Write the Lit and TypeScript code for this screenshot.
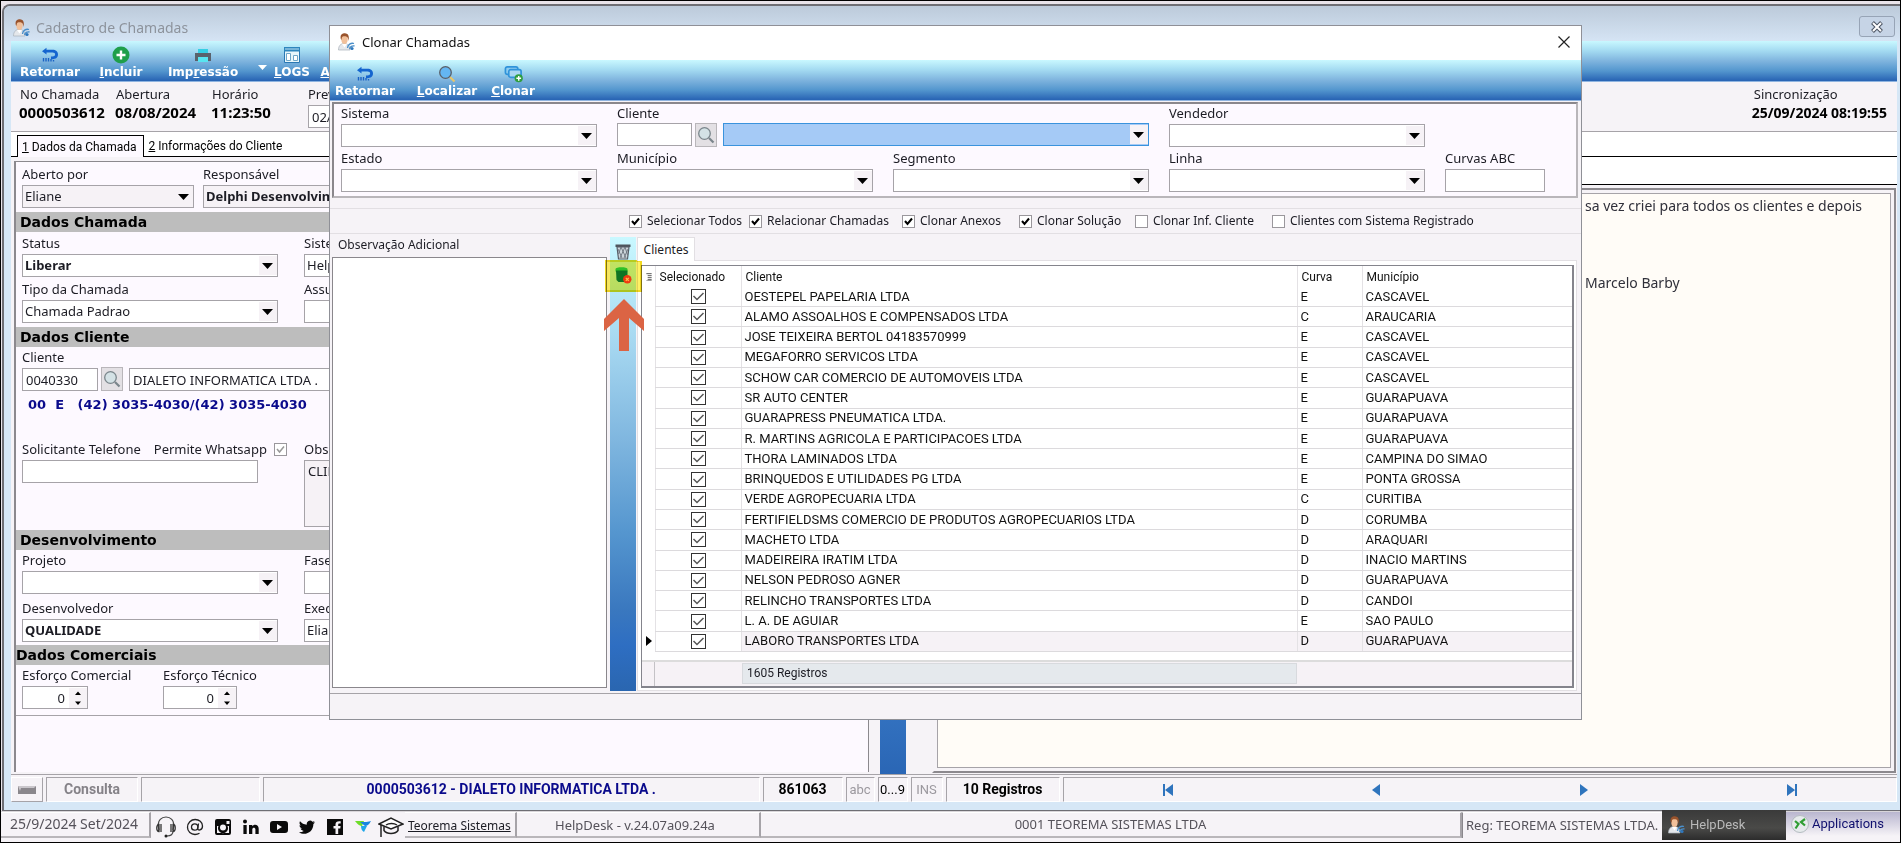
import { LitElement, html, css, svg, nothing } from "lit";
import { customElement } from "lit/decorators.js";

type Client = [string, string, string];

const CLIENTS: Client[] = [
  ["OESTEPEL PAPELARIA LTDA", "E", "CASCAVEL"],
  ["ALAMO ASSOALHOS E COMPENSADOS LTDA", "C", "ARAUCARIA"],
  ["JOSE TEIXEIRA BERTOL 04183570999", "E", "CASCAVEL"],
  ["MEGAFORRO SERVICOS LTDA", "E", "CASCAVEL"],
  ["SCHOW CAR COMERCIO DE AUTOMOVEIS LTDA", "E", "CASCAVEL"],
  ["SR AUTO CENTER", "E", "GUARAPUAVA"],
  ["GUARAPRESS PNEUMATICA LTDA.", "E", "GUARAPUAVA"],
  ["R. MARTINS AGRICOLA E PARTICIPACOES LTDA", "E", "GUARAPUAVA"],
  ["THORA LAMINADOS LTDA", "E", "CAMPINA DO SIMAO"],
  ["BRINQUEDOS E UTILIDADES PG LTDA", "E", "PONTA GROSSA"],
  ["VERDE AGROPECUARIA LTDA", "C", "CURITIBA"],
  ["FERTIFIELDSMS COMERCIO DE PRODUTOS AGROPECUARIOS LTDA", "D", "CORUMBA"],
  ["MACHETO LTDA", "D", "ARAQUARI"],
  ["MADEIREIRA IRATIM LTDA", "D", "INACIO MARTINS"],
  ["NELSON PEDROSO AGNER", "D", "GUARAPUAVA"],
  ["RELINCHO TRANSPORTES LTDA", "D", "CANDOI"],
  ["L. A. DE AGUIAR", "E", "SAO PAULO"],
  ["LABORO TRANSPORTES LTDA", "D", "GUARAPUAVA"],
];

/* ---------- icons ---------- */

const icon = (size: number, box: number, body: unknown) => html`<svg
  width=${size} height=${size} viewBox="0 0 ${box} ${box}" aria-hidden="true">${body}</svg>`;

const personIcon = () => icon(18, 18, svg`
  <path d="M.5 17c0-4 2-6.500 5.500-6.500s6 2 6 6.500z" fill="#e4e7eb" stroke="#a9b1ba" stroke-width=".7"/>
  <path d="M4 11l2.500 3.500L9 11z" fill="#fff"/>
  <ellipse cx="6.500" cy="6.200" rx="3.200" ry="4.800" fill="#f1c09a"/>
  <path d="M2.800 6C1.600 1 5-.2 7 .2 10.800.400 11.400 3.500 10.400 8 10.200 5 9.500 3.500 7.500 3.300 5.600 3 4.600 3.200 4 4.200 3.700 5 3.700 6 3.400 7z" fill="#99532c"/>
  <path d="M9.500 15a5 5 0 0 1 6.500-4.500M11.500 16a4 4 0 0 1 5-3" fill="none" stroke="#4a8fca" stroke-width="1.300"/>
  <circle cx="14" cy="15.500" r="1.600" fill="#2f78bd"/>`);

const backIcon = () => icon(18, 18, svg`
  <path d="M1 5.200 5.500 1.800v2H11.500c3.300 0 5.500 1.900 5.500 4.700s-2.200 4.700-5.500 4.700H10v-2.800h1.500c1.600 0 2.600-.7 2.600-1.900s-1-1.900-2.600-1.900h-6v2z" fill="#1565cf"/>
  <path d="M2.500 12v3.500M5 12v3.500M7.500 12v3.500M10 13v2.500M12.500 14v1.500" stroke="#1a62c4" stroke-width="1.400"/>`);

const addIcon = () => icon(18, 18, svg`
  <circle cx="9" cy="9" r="8.500" fill="#1f9f4b"/>
  <path d="M9 4.500v9M4.500 9h9" stroke="#fff" stroke-width="2.400"/>`);

const printIcon = () => icon(18, 18, svg`
  <path d="M4 3h10v4H4z" fill="#35cfe4"/>
  <path d="M1 7h16v8H1z" fill="#59626c"/>
  <path d="M4 11h10v5H4z" fill="#58e4f0"/>`);

const logsIcon = () => icon(18, 18, svg`
  <path d="M1.500 1.500h15v15h-15z" fill="#e8f6fb" stroke="#2a78b4"/>
  <path d="M1 1h16v4.500H1z" fill="#2e86bd"/>
  <path d="M2 3h14" stroke="#bfe3f5"/>
  <path d="M3.500 7.500h4v7h-4zM10.500 9.500h4v5h-4z" fill="#fff" stroke="#6fa6c8"/>`);

const lensIcon = (glass: string, rim: string, handle: string) => icon(18, 18, svg`
  <path d="M12 12l4.500 4.500" stroke=${handle} stroke-width="2.200"/>
  <circle cx="7.500" cy="7.500" r="5.800" fill=${glass} stroke=${rim} stroke-width="1.300"/>`);

const cloneIcon = () => icon(19, 20, svg`
  <rect x="1.500" y="3" width="13" height="8" rx="2" fill="#8fcdf0" stroke="#2f93da" stroke-width="1.800"/>
  <rect x="5" y="6" width="13" height="8" rx="2" fill="#a9d6f2" stroke="#2f93da" stroke-width="1.800"/>
  <circle cx="15.500" cy="15" r="4.300" fill="#2f9e3f"/>
  <path d="M15.500 12.500v5M13 15h5" stroke="#fff" stroke-width="1.500"/>`);

const basketIcon = () => icon(18, 18, svg`
  <path d="M1.500 2.500h15v2.500h-15z" fill="#4d545c"/>
  <path d="M3 5l1.500 12h9L15 5z" fill="#ccd5da" stroke="#565d66" stroke-width="1.200"/>
  <path d="M4 7l4 9M7 5l5 11M11 5l2.500 8M14 7l-4 9M11 5L6 16M7 5L4.500 12" stroke="#6b737c" stroke-width=".9"/>`);

const binIcon = () => icon(18, 18, svg`
  <path d="M1.500 3c0-2.500 12-2.500 12 0v2.500h-12z" fill="#2fcb62"/>
  <path d="M2 4.500h11.500v8L10 16H4.500L2.500 14z" fill="#0f7a5a"/>
  <circle cx="13.300" cy="13.300" r="4.200" fill="#f03c28"/>
  <path d="M11.800 11.800l3 3M14.800 11.800l-3 3" stroke="#ffc8b8" stroke-width="1.200"/>`);

const headsetIcon = () => icon(22, 22, svg`
  <path d="M4 14C1 3 8 1 11 1s10 2 7 13" fill="none" stroke="#444" stroke-width="1.200"/>
  <path d="M4 8.500c-3 0-3 7 0 7zM6 8v8M18 8.500c3 0 3 7 0 7zM16 8v8" fill="none" stroke="#333" stroke-width="1.300"/>
  <path d="M18 15c0 4-3 5-6 5" fill="none" stroke="#444" stroke-width="1.200"/>
  <circle cx="11" cy="20" r="1.500" fill="#222"/>`);

const atIcon = () => icon(18, 18, svg`
  <circle cx="8.700" cy="9" r="3.200" fill="none" stroke="#222" stroke-width="1.300"/>
  <path d="M12.500 5.500l-.8 5c-.3 2.500 4.800 2 4.800-2.500C16.500 4 13 1.500 9.200 1.500 5 1.500 1.500 5 1.500 9.300c0 4.500 3.500 7.200 7.500 7.200 1.800 0 3.200-.5 4.500-1.200" fill="none" stroke="#222" stroke-width="1.300"/>`);

const instagramIcon = () => icon(18, 18, svg`
  <path fill-rule="evenodd" d="M3 1h12a2 2 0 0 1 2 2v12a2 2 0 0 1-2 2H3a2 2 0 0 1-2-2V3a2 2 0 0 1 2-2zm9.500 2v3h3V3zM3 8v7h12V8h-1.500a5 5 0 1 1-9 0zm6-1.500a3 3 0 1 0 0 6 3 3 0 0 0 0-6z" fill="#0a0a0a"/>`);

const linkedinIcon = () => icon(18, 18, svg`
  <circle cx="3" cy="3.500" r="2" fill="#0a0a0a"/>
  <path d="M1.400 7h3.300v9H1.400zM7 7h3.200v1.300c1.800-2.500 6.500-2 6.500 2.400V16h-3.300v-4.700c0-2.200-3.100-2.200-3.100 0V16H7z" fill="#0a0a0a"/>`);

const youtubeIcon = () => icon(18, 18, svg`
  <path fill-rule="evenodd" d="M3 3h12c2 0 3 1 3 3v6c0 2-1 3-3 3H3c-2 0-3-1-3-3V6c0-2 1-3 3-3zm4 3v6l5-3z" fill="#0a0a0a"/>`);

const twitterIcon = () => icon(18, 18, svg`
  <path d="M17 4.200c-.6.300-1.200.400-1.900.5.700-.4 1.200-1 1.400-1.800-.6.400-1.300.6-2.100.8a3.300 3.300 0 0 0-5.600 3C6 6.600 3.600 5.300 2 3.300c-.9 1.500-.4 3.400 1 4.400-.5 0-1-.2-1.500-.4 0 1.600 1.100 2.900 2.600 3.200-.5.100-1 .2-1.500.1.400 1.300 1.600 2.200 3.100 2.300A6.600 6.600 0 0 1 .9 14.200c6.500 4 14.500-.3 14.500-8.300.6-.5 1.200-1 1.600-1.700z" fill="#0a0a0a"/>`);

const facebookIcon = () => icon(18, 18, svg`
  <path fill-rule="evenodd" d="M1 1h16v16H1zm8.500 15h2.700v-5.500h2.100l.3-2.400h-2.400V6.700c0-.8.300-1.200 1.200-1.200h1.300V3.300c-3.200-.5-5.200.5-5.200 3.100v1.700h-2v2.400h2z" fill="#0a0a0a"/>`);

const brandIcon = () => icon(18, 18, svg`
  <path d="M1 3h9l-2 5C6 8 3 6 1 3z" fill="#6fdc2a"/>
  <path d="M6 4c4 0 9 0 11-1-2 4-4 5-6 5z" fill="#1685e0"/>
  <path d="M7 8h6l-3 6c-2-1-3-3-3-6z" fill="#1ea6e8"/>`);

const capIcon = () => icon(26, 26, svg`
  <path d="M1 10l12-6 12 6-12 5z" fill="#fff" stroke="#222" stroke-width="1.500"/>
  <path d="M6 12.500v4c3 4 11 4 14 0v-4" fill="none" stroke="#222" stroke-width="1.500"/>
  <path d="M8 11c3-2 8-2 11 0M3 11v10M3 20v3" fill="none" stroke="#222" stroke-width="1.500"/>`);

const appsIcon = () => icon(18, 18, svg`
  <circle cx="9" cy="9" r="8.500" fill="#e6eaec" stroke="#b4bcc0"/>
  <path d="M4 6l3.500 3L4.500 13.500M14 4l-4 3 4 3.500" fill="none" stroke="#2f9e33" stroke-width="2.200"/>`);

const toolButton = (cls: string, glyph: unknown, key: string, rest: string) => html`
  <button class="tool ${cls}">${glyph}<span>${key ? html`<u>${key}</u>` : nothing}${rest}</span></button>`;

/* ---------- shared styles ---------- */

const shared = css`
  * { box-sizing: border-box; }
  button, input, select, textarea { font: inherit; color: inherit; margin: 0; border-radius: 0; }
  button { border: 0; padding: 0; background: none; }
  svg { display: block; }
  .toolbar {
    display: flex; height: 41px; flex: none; overflow: hidden;
    background: linear-gradient(#c9f8ff, #a3daf1 25%, #7fb4de 50%, #5396ce 75%, #2a66b5 98%);
    border-bottom: 1px solid #8fb4e0;
  }
  .tool {
    display: flex; flex-direction: column; align-items: center; justify-content: flex-end;
    height: 40px; flex: none; color: #fff;
    font: bold 12px/17px "DejaVu Sans", sans-serif;
  }
  .w42 { width: 42px; } .w60 { width: 60px; } .w64 { width: 64px; } .w70 { width: 70px; } .w78 { width: 78px; } .w100 { width: 100px; }
  .field { display: flex; flex-direction: column; gap: 2px; min-width: 0; }
  .field > label { line-height: 18px; white-space: nowrap; }
  .box, select {
    height: 23px; border: 1px solid #a6a3a8; background-color: #fff; padding: 0 3px;
    min-width: 0; width: 100%; line-height: 21px; outline: 0; display: block;
    font-family: "Noto Sans", sans-serif; font-size: 13px;
  }
  select {
    appearance: none; padding: 0 20px 0 2px;
    background-image: url("data:image/svg+xml,%3Csvg xmlns='http://www.w3.org/2000/svg' width='18' height='19'%3E%3Cpath d='M0 0h18v19H0z' fill='%23f6f2f6'/%3E%3Cpath d='M3 7h11l-5.500 6z' fill='%23000'/%3E%3C/svg%3E");
    background-repeat: no-repeat; background-position: right 1px;
  }
  .bold { font-weight: bold; }
  .lens {
    width: 22px; height: 24px; flex: none; background: #e3e0e4; border: 1px solid #b9b6ba;
    display: grid; place-items: center;
  }
  input[type="checkbox"] {
    appearance: none; width: 13px; height: 13px; border: 1px solid #9a979c; background: #fff;
    flex: none; display: block;
  }
  input[type="checkbox"]:checked {
    background-image: url("data:image/svg+xml,%3Csvg xmlns='http://www.w3.org/2000/svg' width='11' height='11'%3E%3Cpath d='M2 5l2.500 3L9 2.500' fill='none' stroke='%23000' stroke-width='2'/%3E%3C/svg%3E");
  }
`;

/* ---------- call registration window ---------- */

@customElement("call-window")
export class CallWindow extends LitElement {
  static styles = [shared, css`
    :host {
      display: flex; flex-direction: column; min-height: 0; color: #1c1c24;
      border: 2px solid #6e6e74; border-right: 0; border-bottom-width: 1px; border-top-left-radius: 8px;
      background: #d6e7f6; padding: 0 3px 8px 7px;
      font: 13px/18px "Noto Sans", sans-serif;
    }
    .title {
      height: 35px; display: flex; align-items: center; gap: 5px; padding: 8px 2px 0 9px; flex: none;
      margin: 0 -3px 0 -7px; border-top-left-radius: 6px;
      background: linear-gradient(#bccada, #d5e4f4); color: #8d939c; font-size: 14px;
    }
    .title h1 { font: inherit; margin: 0; flex: 1; }
    .close {
      width: 36px; height: 21px; border: 1px solid #97a4b6; border-radius: 3px; margin-right: 3px;
      display: grid; place-items: center; background: #c6d4e6; margin-bottom: 2px;
    }
    .more { width: 18px; display: flex; align-items: center; justify-content: center; padding-top: 13px; }
    .head {
      height: 50px; flex: none; display: flex; justify-content: space-between;
      background: #f6f3f7; border-bottom: 1px solid #a6a3a8; padding: 3px 10px 0 8px;
    }
    .facts { display: flex; }
    .head dl { margin: 0; white-space: nowrap; }
    dt { line-height: 18px; }
    dd { margin: 0; font-weight: bold; font-size: 15px; line-height: 19px; color: #000; }
    .n1 { width: 96px; } .n2 { width: 96px; } .n3 { width: 97px; }
    .facts dt { padding-left: 1px; }
    .sync dt { padding-left: 2px; }
    .sync dd { font-size: 14px; }
    .tabs { display: flex; height: 25px; flex: none; background: #fff; border-bottom: 1px solid #000; padding: 3px 0 0 6px; }
    .tabs button { line-height: 22px; padding: 0 4px; white-space: nowrap; font-family: "Roboto", sans-serif; font-size: 12px; color: #000; }
    .tabs .on { border: 1px solid #000; border-bottom: 0; background: #fdf9ff; height: 22px; margin-bottom: -1px; padding: 0 7px 0 4px; }
    .body { flex: 1; min-height: 0; display: flex; background: #f6f3f7; }
    .form {
      flex: 852 1 0; min-width: 0; margin: 4px 0 2px 3px; border: 1px solid #8c898e; border-left-width: 2px;
      border-bottom: 0; background: #fdf9ff; overflow: hidden;
    }
    .bar { height: 20px; background: #bdbdbd; padding-left: 4px; font: bold 14px/20px "DejaVu Sans", sans-serif; color: #000; }
    .bar.flush { padding-left: 0; }
    h2 { margin: 0; }
    .row { display: grid; grid-template-columns: 256px 1fr; column-gap: 26px; padding: 2px 0 4px 6px; }
    .row.owner { grid-template-columns: 172px 256px; column-gap: 9px; padding-top: 3px; }
    .row.first { padding-bottom: 1px; }
    .row.project { padding-top: 1px; padding-bottom: 3px; }
    .row.tight { padding-bottom: 3px; }
    .row.effort { grid-template-columns: 66px 74px; column-gap: 75px; padding-top: 1px; padding-bottom: 6px; border-bottom: 1px solid #a6a3a8; }
    .client { display: flex; padding: 1px 0 0 6px; align-items: flex-end; }
    .code { width: 76px; margin-right: 3px; }
    .name { width: 280px; margin-left: 6px; }
    .phone { color: #0a0a8c; font: bold 13px/20px "DejaVu Sans", sans-serif; padding: 4px 0 0 12px; white-space: pre; height: 49px; }
    .contact { display: grid; grid-template-columns: 256px 1fr; column-gap: 26px; padding: 0 0 4px 6px; height: 90px; }
    .asked { display: flex; gap: 13px; align-items: center; white-space: nowrap; line-height: 18px; }
    .asked label { display: flex; align-items: center; gap: 7px; font-size: 13px; }
    .phonebox { width: 236px; margin-top: 2px; }
    textarea.box { height: 67px; background: #f6f2f6; resize: none; }
    .soft { background-color: #f6f2f6; }
    .spin { text-align: right; padding-right: 22px; appearance: textfield;
      background: #fff url("data:image/svg+xml,%3Csvg xmlns='http://www.w3.org/2000/svg' width='18' height='20'%3E%3Cpath d='M0 0h18v20H0z' fill='%23f6f2f6'/%3E%3Cpath d='M6 7l3-3.500L12 7zM6 13.500h6L9 17z' fill='%23000'/%3E%3C/svg%3E") right 1px no-repeat; }
    .spin::-webkit-inner-spin-button { display: none; }
    input[type="checkbox"]:disabled { background-image: url("data:image/svg+xml,%3Csvg xmlns='http://www.w3.org/2000/svg' width='11' height='11'%3E%3Cpath d='M2 5l2.500 3L9 2.500' fill='none' stroke='%23999' stroke-width='1.500'/%3E%3C/svg%3E"); }
    .split { width: 26px; margin: 0 26px 0 11px; background: linear-gradient(#c9f8ff, #7fb4de 45%, #4a8acb 70%, #3372c0 90%, #2a66b5); flex: none; }
    .notes { flex: 965 1 0; min-width: 0; display: flex; flex-direction: column; }
    .strip { height: 28px; background: #fff; border-bottom: 1px solid #000; flex: none; }
    .frame { flex: 1; margin: 3px 1px 1px 0; border: 2px solid #8c898e; border-left-color: #f6f3f7; padding: 3px; display: flex; }
    .memo {
      flex: 1; margin: 0; border: 1px solid #a6a3a8; background: #fffcf7; padding: 1px 0 0 647px; overflow: hidden;
      font: 14px/22px "Noto Sans", sans-serif; color: #30303a; white-space: nowrap;
    }
    .memo p { margin: 0 0 55px; }
    .status { display: flex; height: 28px; flex: none; background: #f6f3f7; border-top: 1px solid #a6a3a8; gap: 3px; padding-top: 2px; }
    .cell { border: 1px solid #a6a3a8; border-right-color: #fff; border-bottom-color: #fff; text-align: center; line-height: 23px; white-space: nowrap; flex: none; overflow: hidden; font-family: "Roboto", sans-serif; font-size: 14px; font-weight: bold; color: #000; }
    .cell.dim { color: #9b989e; font-weight: normal; font-size: 13px; }
    .cell.thin { font-weight: normal; font-size: 13px; }
    .c0 { width: 32px; display: grid; place-items: center; border-color: #fff #a6a3a8 #a6a3a8 #fff; }
    .c1 { width: 92px; color: #858288; } .c2 { width: 119px; } .c3 { flex: 1 1 496px; color: #0a0a8c; }
    .c4 { width: 80px; } .c5 { width: 29px; } .c6 { width: 30px; } .c7 { width: 32px; } .c8 { width: 114px; }
    .c9 { flex: 1 1 834px; display: flex; justify-content: space-around; align-items: center; }
  `];

  private combo(id: string, label: string, value = "", cls = "") {
    return html`<div class="field"><label for=${id}>${label}</label>
      <select id=${id} class=${cls}><option>${value}</option></select></div>`;
  }

  private nav(name: string, d: string) {
    return html`<button aria-label=${name}>${icon(14, 14, svg`<path d=${d} fill="#2f74bd"/>`)}</button>`;
  }

  render() {
    return html`
      <header class="title">
        ${personIcon()}<h1>Cadastro de Chamadas</h1>
        <button class="close" aria-label="Fechar">${icon(12, 12, svg`
          <path d="M1.500 1.500l9 9M10.500 1.500l-9 9" stroke="#4b5362" stroke-width="4"/>
          <path d="M2 2l8 8M10 2l-8 8" stroke="#fff" stroke-width="2"/>`)}</button>
      </header>
      <nav class="toolbar">
        ${toolButton("w78", backIcon(), "", "Retornar")}
        ${toolButton("w64", addIcon(), "I", "ncluir")}
        <button class="tool w100">${printIcon()}<span>Imp<u>r</u>essão</span></button>
        <button class="more" aria-label="Opções">${icon(9, 9, svg`<path d="M0 2h9L4.500 7z" fill="#fff"/>`)}</button>
        ${toolButton("w42", logsIcon(), "L", "OGS")}
        ${toolButton("w64", nothing, "A", "nexos")}
      </nav>
      <section class="head">
        <div class="facts">
          <dl class="n1"><dt>No Chamada</dt><dd>0000503612</dd></dl>
          <dl class="n2"><dt>Abertura</dt><dd>08/08/2024</dd></dl>
          <dl class="n3"><dt>Horário</dt><dd>11:23:50</dd></dl>
          <div class="field"><label for="prev">Previsão</label><input id="prev" class="box" value="02/09/2024"></div>
        </div>
        <dl class="sync"><dt>Sincronização</dt><dd>25/09/2024 08:19:55</dd></dl>
      </section>
      <nav class="tabs">
        <button class="on"><u>1</u> Dados da Chamada</button>
        <button><u>2</u> Informações do Cliente</button>
      </nav>
      <main class="body">
        <form class="form">
          <div class="row owner">
            ${this.combo("aberto", "Aberto por", "Eliane", "soft")}
            ${this.combo("resp", "Responsável", "Delphi Desenvolvimento", "soft bold")}
          </div>
          <h2 class="bar">Dados Chamada</h2>
          <div class="row first">
            ${this.combo("status", "Status", "Liberar", "bold")}
            ${this.combo("sistema", "Sistema", "HelpDesk")}
          </div>
          <div class="row">
            ${this.combo("tipo", "Tipo da Chamada", "Chamada Padrao")}
            ${this.combo("assunto", "Assunto")}
          </div>
          <h2 class="bar">Dados Cliente</h2>
          <div class="client">
            <div class="field code"><label for="cod">Cliente</label><input id="cod" class="box" value="0040330"></div>
            <button type="button" class="lens" aria-label="Pesquisar">${lensIcon("#d4e2e6", "#7b868c", "#7b868c")}</button>
            <input class="box name" aria-label="Nome do cliente" value="DIALETO INFORMATICA LTDA .">
          </div>
          <div class="phone">00  E   (42) 3035-4030/(42) 3035-4030</div>
          <div class="contact">
            <div>
              <div class="asked"><label for="tel">Solicitante Telefone</label>
                <label>Permite Whatsapp <input type="checkbox" checked disabled></label></div>
              <input id="tel" class="box phonebox">
            </div>
            <div class="field"><label for="obs">Observação</label><textarea id="obs" class="box">CLIENTE</textarea></div>
          </div>
          <h2 class="bar">Desenvolvimento</h2>
          <div class="row project">
            ${this.combo("projeto", "Projeto")}
            ${this.combo("fase", "Fase")}
          </div>
          <div class="row tight">
            ${this.combo("dev", "Desenvolvedor", "QUALIDADE", "bold")}
            ${this.combo("exec", "Executor", "Eliane")}
          </div>
          <h2 class="bar flush">Dados Comerciais</h2>
          <div class="row effort">
            <div class="field"><label for="ec">Esforço Comercial</label><input id="ec" type="number" class="box spin" value="0"></div>
            <div class="field"><label for="et">Esforço Técnico</label><input id="et" type="number" class="box spin" value="0"></div>
          </div>
        </form>
        <div class="split"></div>
        <section class="notes">
          <div class="strip"></div>
          <div class="frame"><div class="memo">
            <p>sa vez criei para todos os clientes e depois</p>
            <p>Marcelo Barby</p>
          </div></div>
        </section>
      </main>
      <footer class="status">
        <div class="cell c0">${icon(20, 20, svg`<path d="M1 6h18v8H1z" fill="#8a878c"/><path d="M1 6h18l-2 2H4l-1 3z" fill="#c9c6cb"/>`)}</div>
        <div class="cell c1">Consulta</div>
        <div class="cell c2"></div>
        <div class="cell c3">0000503612 - DIALETO INFORMATICA LTDA .</div>
        <div class="cell c4">861063</div>
        <div class="cell dim c5">abc</div>
        <div class="cell thin c6">0...9</div>
        <div class="cell dim c7">INS</div>
        <div class="cell c8">10 Registros</div>
        <div class="cell c9">
          ${this.nav("Primeiro", "M2 1h2v12H2zM12 1v12L4 7z")}
          ${this.nav("Anterior", "M11 1v12L3 7z")}
          ${this.nav("Próximo", "M3 1v12l8-6z")}
          ${this.nav("Último", "M10 1h2v12h-2zM2 1v12l8-6z")}
        </div>
      </footer>`;
  }
}

/* ---------- clone dialog ---------- */

@customElement("clone-dialog")
export class CloneDialog extends LitElement {
  static styles = [shared, css`
    :host {
      display: flex; flex-direction: column; background: #f6f3f7; border: 1px solid #8f9097; color: #1c1c24;
      font: 13px/18px "Noto Sans", sans-serif;
    }
    .title { display: flex; align-items: center; gap: 6px; height: 34px; background: #fff; padding: 0 9px 2px 8px; flex: none; }
    .title h1 { font: 13px/18px "Noto Sans", sans-serif; margin: 0; flex: 1; color: #111; }
    .title button { padding: 2px; }
    .locate { margin: 0 6px 0 17px; }
    .filters {
      margin: 1px 3px 0 2px; border: 2px solid #8a878c; border-right-color: #b9b6ba; border-bottom-color: #b9b6ba;
      background: #fdf9ff; height: 96px; flex: none; padding: 0 0 0 7px;
      display: grid; grid-template-columns: repeat(4, minmax(0, 256px)) 100px; grid-template-rows: 45px 45px; column-gap: 20px;
    }
    .wide { grid-column: 2 / 4; display: grid; grid-template-columns: 75px 22px 1fr; gap: 1px 3px; grid-template-rows: 18px 24px; }
    .wide label { grid-column: 1 / 4; line-height: 18px; }
    .wide select { margin-left: 3px; width: auto; border-color: #3a93dd; background-color: #a5caf6; }
    .options {
      height: 26px; margin-top: 10px; flex: none; border: solid #e2dfe3; border-width: 1px 0; padding-left: 299px;
      display: grid; grid-template-columns: 120px 153px 117px 116px 137px 1fr; align-items: center; font-size: 12px;
    }
    .options label { display: flex; gap: 5px; align-items: center; white-space: nowrap; }
    .main { flex: 1; min-height: 0; display: flex; padding: 3px 4px 2px 2px; position: relative; }
    .note { width: 275px; flex: none; display: flex; flex-direction: column; }
    .note label { font-size: 12px; line-height: 16px; padding: 0 6px; height: 20px; }
    .note textarea { flex: 1; border: 1px solid #8a878c; resize: none; background: #fff; outline: 0; margin-bottom: 3px; }
    .side {
      width: 26px; margin-left: 3px; flex: none; display: flex; flex-direction: column; align-items: center; gap: 6px; padding-top: 5px;
      background: linear-gradient(#c9f8ff, #a3d5ef 25%, #7fb6df 45%, #5596cf 65%, #3a78bf 82%, #2e6ec2 90%, #2a66b0);
    }
    .pane { flex: 1; min-width: 0; display: flex; flex-direction: column; margin-left: 1px; }
    .tab { width: 58px; height: 24px; background: #fff; border: 1px solid #e2dfe3; border-bottom: 0; font-size: 12px; line-height: 20px; z-index: 1; margin-bottom: -1px; }
    .sheet { flex: 1; min-height: 0; background: #fff; border: 1px solid #e2dfe3; padding: 4px 2px 2px 3px; display: flex; }
    .grid { flex: 1; min-width: 0; border: 2px solid #84848c; border-width: 1px 2px 2px 1px; display: flex; flex-direction: column; }
    table { border-collapse: collapse; width: 100%; height: 386px; flex: none; table-layout: fixed; font: 13px/16px "Roboto", sans-serif; color: #111; }
    th { font-weight: normal; text-align: left; height: 21px; padding: 1px 4px 0; font-size: 12px; }
    td { padding: 0 3px; border-bottom: 1px solid #dcdadd; white-space: nowrap; overflow: hidden; }
    td + td, th + th { border-left: 1px solid #e4e2e5; }
    td:first-child, th:first-child { border-bottom: 0; padding: 0 3px; }
    .k0 { width: 13px; } .k1 { width: 86px; } .k3 { width: 65px; } .k4 { width: 210px; }
    td input[type="checkbox"] { width: 15px; height: 15px; border-color: #333; margin: 0 auto; }
    td input[type="checkbox"]:checked {
      background-image: url("data:image/svg+xml,%3Csvg xmlns='http://www.w3.org/2000/svg' width='13' height='13'%3E%3Cpath d='M1.500 6l3.500 3.500L11.500 3' fill='none' stroke='%23555' stroke-width='1.500'/%3E%3C/svg%3E");
    }
    .current td:nth-child(n+3) { background: #f6f2f6; }
    .total { margin-top: auto; height: 26px; flex: none; border-top: 2px solid #dcdcdc; background: #f6f2f6; display: flex; }
    .total i { width: 13px; border-right: 1px solid #c4c2c6; }
    .total output { margin: 1px 275px 2px 87px; flex: 1; background: #e5e9ed; border: 1px solid #d8dade; padding-left: 4px; font: 12px/19px "Roboto", sans-serif; }
    .foot { height: 26px; flex: none; border-top: 1px solid #a6a3a8; }
    .highlight { position: absolute; left: 275px; top: 26px; width: 37px; height: 32px; background: #fff264; border: 2px solid #f2d820; mix-blend-mode: multiply; }
    .arrow { position: absolute; left: 274px; top: 65px; }
  `];

  private combo(id: string, label: string) {
    return html`<div class="field"><label for=${id}>${label}</label>
      <select id=${id}><option></option></select></div>`;
  }

  render() {
    const options: [string, boolean][] = [
      ["Selecionar Todos", true], ["Relacionar Chamadas", true], ["Clonar Anexos", true],
      ["Clonar Solução", true], ["Clonar Inf. Cliente", false], ["Clientes com Sistema Registrado", false],
    ];
    return html`
      <header class="title">${personIcon()}<h1>Clonar Chamadas</h1>
        <button aria-label="Fechar">${icon(12, 12, svg`<path d="M.5.5l11 11M11.500.5l-11 11" stroke="#222" stroke-width="1.200"/>`)}</button>
      </header>
      <nav class="toolbar">
        ${toolButton("w70", backIcon(), "", "Retornar")}
        ${toolButton("w60 locate", lensIcon("#64b6f2", "#58606a", "#e6c66a"), "L", "ocalizar")}
        ${toolButton("w60", cloneIcon(), "C", "lonar")}
      </nav>
      <section class="filters">
        ${this.combo("sis", "Sistema")}
        <div class="wide">
          <label for="cli">Cliente</label>
          <input id="cli" class="box">
          <button class="lens" aria-label="Pesquisar">${lensIcon("#d4e2e6", "#7b868c", "#7b868c")}</button>
          <select aria-label="Nome do cliente"><option></option></select>
        </div>
        ${this.combo("ven", "Vendedor")}
        <span></span>
        ${this.combo("est", "Estado")}
        ${this.combo("mun", "Município")}
        ${this.combo("seg", "Segmento")}
        ${this.combo("lin", "Linha")}
        <div class="field"><label for="abc">Curvas ABC</label><input id="abc" class="box"></div>
      </section>
      <section class="options">
        ${options.map(([t, on]) => html`<label><input type="checkbox" ?checked=${on}>${t}</label>`)}
      </section>
      <section class="main">
        <div class="note"><label for="oa">Observação Adicional</label><textarea id="oa"></textarea></div>
        <div class="side">
          <button aria-label="Limpar">${basketIcon()}</button>
          <button aria-label="Remover">${binIcon()}</button>
        </div>
        <div class="pane">
          <button class="tab">Clientes</button>
          <div class="sheet"><div class="grid">
            <table>
              <colgroup><col class="k0"><col class="k1"><col><col class="k3"><col class="k4"></colgroup>
              <thead><tr>
                <th>${icon(8, 12, svg`<path d="M2 1h8M4 4h6M4 7h6M4 10h6M2 12h8" stroke="#333" stroke-width="1.200"/>`)}</th>
                <th>Selecionado</th><th>Cliente</th><th>Curva</th><th>Município</th>
              </tr></thead>
              <tbody>${CLIENTS.map(([name, curve, city], i) => html`
                <tr class=${i === CLIENTS.length - 1 ? "current" : ""}>
                  <td>${i === CLIENTS.length - 1 ? html`<svg width="7" height="10" viewBox="0 0 7 10" aria-hidden="true"><path d="M1 0v10l6-5z" fill="#000"/></svg>` : nothing}</td>
                  <td><input type="checkbox" checked aria-label=${name}></td>
                  <td>${name}</td><td>${curve}</td><td>${city}</td>
                </tr>`)}</tbody>
            </table>
            <div class="total"><i></i><output>1605 Registros</output></div>
          </div></div>
        </div>
        <div class="highlight"></div>
        <svg class="arrow" width="40" height="52" viewBox="0 0 40 52" aria-hidden="true">
          <path d="M20 0l20 20v12L25 19v33H15V19L0 32V20z" fill="#db6444"/></svg>
      </section>
      <footer class="foot"></footer>`;
  }
}

/* ---------- bottom bar ---------- */

@customElement("task-bar")
export class TaskBar extends LitElement {
  static styles = [shared, css`
    :host {
      display: flex; height: 30px; background: #f6f3f7; color: #55525a; white-space: nowrap;
      font: 13px/24px "Noto Sans", sans-serif; border-top: 1px solid #d9d6da;
    }
    .part { height: 26px; border-right: 2px solid #a6a3a8; border-bottom: 2px solid #b9b6ba; border-top: 1px solid #fff; flex: none; overflow: hidden; }
    .date { width: 150px; padding-left: 9px; font-size: 14px; line-height: 22px; }
    .links { width: 254px; display: grid; grid-template-columns: 30px repeat(8, 28px); align-items: center; flex: none; }
    .links a { display: grid; place-items: center; }
    .school { width: 112px; padding-left: 3px; }
    .school a { color: #1c1c24; font-size: 12px; }
    .ver { width: 244px; padding-left: 38px; }
    .firm { flex: 1 1 700px; text-align: center; line-height: 22px; }
    .reg { width: 200px; border-right: 0; border-bottom: 0; border-left: 1px solid #8a878c; padding-left: 3px; }
    .active { width: 124px; height: 30px; background: linear-gradient(#3a3a3a, #4a4a48 60%, #2c2c2c); color: #b9b9b9; display: flex; align-items: center; gap: 4px; padding-left: 6px; flex: none; font: 13px/24px "Roboto", sans-serif; margin-top: -2px; }
    .apps { width: 114px; height: 24px; background: linear-gradient(#b9b6cf, #f6f3f7); color: #10106e; display: flex; align-items: center; gap: 3px; padding-left: 5px; flex: none; font: 13px/24px "Roboto", sans-serif; }
  `];

  render() {
    const links: [string, unknown][] = [
      ["Suporte", headsetIcon()], ["E-mail", atIcon()], ["Instagram", instagramIcon()], ["LinkedIn", linkedinIcon()],
      ["YouTube", youtubeIcon()], ["Twitter", twitterIcon()], ["Facebook", facebookIcon()], ["Site", brandIcon()], ["Cursos", capIcon()],
    ];
    return html`
      <div class="part date">25/9/2024 Set/2024</div>
      <nav class="links">${links.map(([n, g]) => html`<a href="#" aria-label=${n}>${g}</a>`)}</nav>
      <div class="part school"><a href="#">Teorema Sistemas</a></div>
      <div class="part ver">HelpDesk - v.24.07a09.24a</div>
      <div class="part firm">0001 TEOREMA SISTEMAS LTDA</div>
      <div class="part reg">Reg: TEOREMA SISTEMAS LTDA.</div>
      <button class="active">${personIcon()}HelpDesk</button>
      <button class="apps">${appsIcon()}Applications</button>`;
  }
}

@customElement("app-root")
export class AppRoot extends LitElement {
  static styles = css`
    :host {
      display: flex; flex-direction: column; position: relative; box-sizing: border-box; height: 100vh; min-height: 800px;
      border: 1px solid #000; background: #e9e4ea; padding-top: 3px; overflow: hidden;
    }
    call-window { flex: 1; margin-left: 1px; }
    task-bar { flex: none; }
    clone-dialog { position: absolute; left: 328px; right: 318px; top: 24px; bottom: 122px; }
  `;

  render() {
    return html`<call-window></call-window><task-bar></task-bar><clone-dialog></clone-dialog>`;
  }
}
